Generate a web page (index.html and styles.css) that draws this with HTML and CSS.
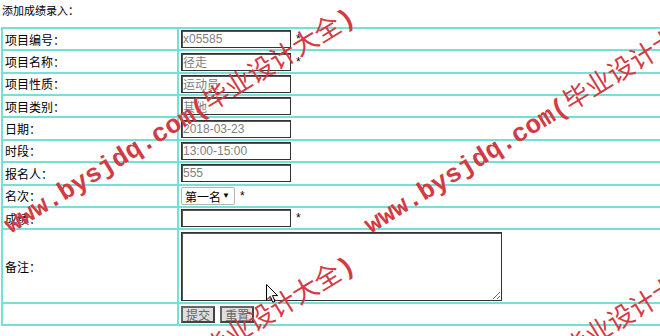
FILE: index.html
```html
<!DOCTYPE html>
<html lang="zh-CN">
<head>
    <meta charset="UTF-8">
    <meta name="viewport" content="width=device-width, initial-scale=1.0">
    <title>添加成绩录入</title>
    <link rel="stylesheet" href="styles.css">
</head>
<body>
    <div class="title">添加成绩录入：</div>
    <form>
    <table class="form-table">
        <tr>
            <td class="label">项目编号：</td>
            <td><input class="txt" type="text" value="x05585"><span class="star">*</span></td>
        </tr>
        <tr>
            <td class="label">项目名称：</td>
            <td><input class="txt" type="text" value="径走"><span class="star">*</span></td>
        </tr>
        <tr>
            <td class="label">项目性质：</td>
            <td><input class="txt" type="text" value="运动员"></td>
        </tr>
        <tr>
            <td class="label">项目类别：</td>
            <td><input class="txt" type="text" value="其他"></td>
        </tr>
        <tr>
            <td class="label">日期：</td>
            <td><input class="txt" type="text" value="2018-03-23"></td>
        </tr>
        <tr>
            <td class="label">时段：</td>
            <td><input class="txt" type="text" value="13:00-15:00"></td>
        </tr>
        <tr>
            <td class="label">报名人：</td>
            <td><input class="txt" type="text" value="555"></td>
        </tr>
        <tr>
            <td class="label">名次：</td>
            <td>
                <span class="select-box">
                    <select class="rank">
                        <option>第一名</option>
                        <option>第二名</option>
                        <option>第三名</option>
                    </select>
                    <span class="arrow">▼</span>
                </span><span class="star">*</span>
            </td>
        </tr>
        <tr>
            <td class="label">成绩：</td>
            <td><input class="txt score" type="text" value=""><span class="star">*</span></td>
        </tr>
        <tr class="note-row">
            <td class="label">备注：</td>
            <td><textarea class="note"></textarea></td>
        </tr>
        <tr>
            <td class="label"></td>
            <td>
                <button type="button" class="btn">提交</button>
                <button type="reset" class="btn">重置</button>
            </td>
        </tr>
    </table>
    </form>

    <div class="watermark">
        <span class="wm wm1"><span class="wm-en">www.bysjdq.com(</span>毕业设计大全<span class="wm-en">)</span></span>
        <span class="wm wm2"><span class="wm-en">www.bysjdq.com(</span>毕业设计大全<span class="wm-en">)</span></span>
        <span class="wm wm3"><span class="wm-en">www.bysjdq.com(</span>毕业设计大全<span class="wm-en">)</span></span>
        <span class="wm wm4"><span class="wm-en">www.bysjdq.com(</span>毕业设计大全<span class="wm-en">)</span></span>
    </div>

    <svg class="cursor" width="13" height="20" viewBox="0 0 13 20">
        <path d="M0.5 0.5 L0.5 16 L4.3 12.4 L6.8 18.3 L9 17.4 L6.5 11.6 L11.5 11.6 Z" fill="#fff" stroke="#000" stroke-width="1"/>
    </svg>
</body>
</html>
```

FILE: styles.css
```css
html {
    overflow: hidden;
}
body {
    margin: 0;
    padding: 0 1px;
    height: 336px;
    position: relative;
    font-family: "Liberation Sans", "Noto Sans CJK SC", sans-serif;
    font-size: 12px;
    color: #000;
    background: #fff;
}
.title {
    font-size: 11px;
    height: 27px;
    line-height: 22px;
    padding-left: 1px;
}
form {
    margin: 0;
}
.form-table {
    width: 690px;
    border: 1px solid #74dfdb;
    border-spacing: 0;
}
.form-table td {
    border: 1px solid #74dfdb;
    padding: 0 2px;
    height: 22.37px;
    box-sizing: border-box;
    vertical-align: middle;
}
.form-table td.label {
    width: 176px;
}
.form-table .note-row td {
    height: 74px;
}
.form-table tr:last-child td {
    height: 22px;
}
.txt {
    width: 110px;
    height: 18px;
    box-sizing: border-box;
    margin: 0;
    padding: 0 1px;
    border: 1px solid #333;
    box-shadow: inset 1px 1px 0 #555;
    font-family: "Liberation Sans", "Noto Sans CJK SC", sans-serif;
    font-size: 12px;
    color: #808080;
    vertical-align: middle;
}
.star {
    margin-left: 5px;
    vertical-align: middle;
}
.select-box {
    position: relative;
    display: inline-block;
    vertical-align: middle;
}
.rank {
    appearance: none;
    -webkit-appearance: none;
    width: 54px;
    height: 18px;
    margin: 0;
    padding: 0 0 0 3px;
    border: 1px solid #b5b5b5;
    border-radius: 2px;
    background: #fff;
    font-family: "Noto Sans CJK SC", sans-serif;
    font-size: 12px;
    color: #000;
    display: block;
}
.arrow {
    position: absolute;
    right: 5px;
    top: 3px;
    font-size: 8px;
    line-height: 12px;
    pointer-events: none;
}
.note {
    display: block;
    width: 321px;
    height: 69px;
    box-sizing: border-box;
    margin: 0;
    padding: 1px;
    border: 1px solid #333;
    box-shadow: inset 1px 1px 0 #555;
    font-size: 12px;
}
.btn {
    height: 17px;
    margin: 0 2px 0 0;
    padding: 0 3px;
    border: 2px solid #444;
    border-top-color: #666;
    border-left-color: #666;
    background: #dedede;
    font-family: "Noto Sans CJK SC", sans-serif;
    font-size: 12px;
    line-height: 13px;
    color: #666;
    vertical-align: middle;
}
.watermark {
    position: absolute;
    left: 0;
    top: 0;
    width: 660px;
    height: 336px;
    overflow: hidden;
    pointer-events: none;
}
.wm {
    position: absolute;
    white-space: nowrap;
    font-family: "Noto Sans CJK SC", sans-serif;
    font-size: 26px;
    line-height: 30px;
    color: #d43a44;
    transform: rotate(-31.5deg);
    transform-origin: 0 50%;
}
.wm-en {
    font-family: "Liberation Mono", monospace;
    font-weight: bold;
}
.wm1 {
    left: 6px;
    top: 209px;
}
.wm2 {
    left: 366px;
    top: 209px;
}
.wm3 {
    left: 6px;
    top: 457px;
}
.wm4 {
    left: 366px;
    top: 457px;
}
.cursor {
    position: absolute;
    left: 266px;
    top: 284px;
}
```
